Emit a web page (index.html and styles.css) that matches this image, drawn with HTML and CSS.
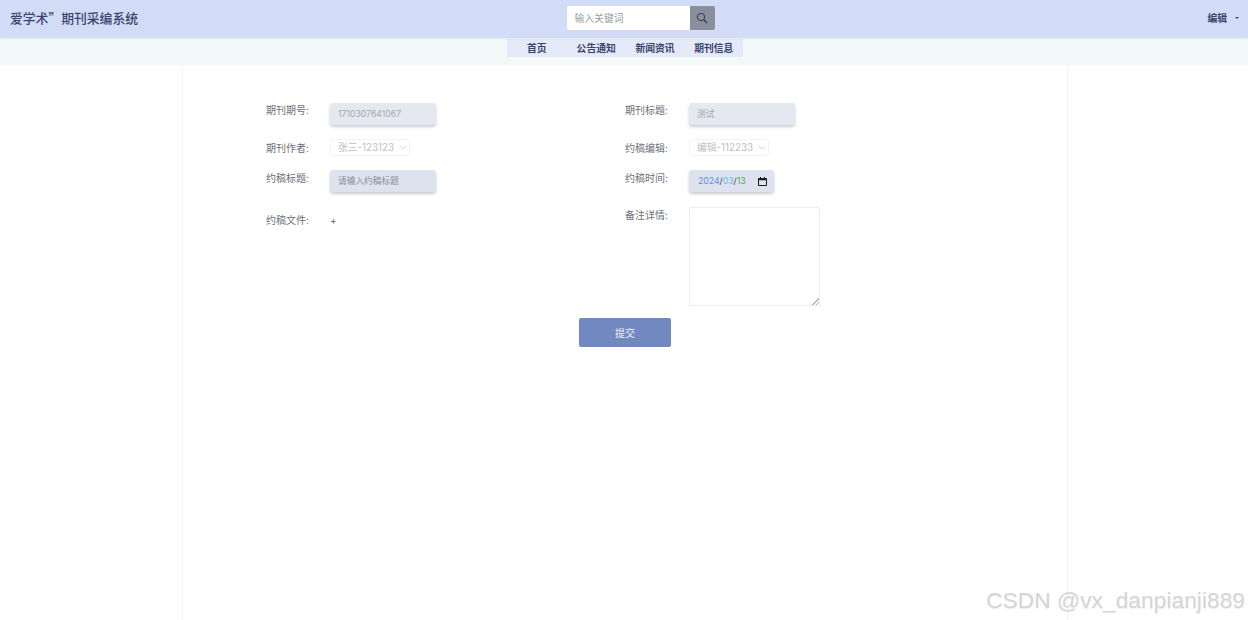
FILE: index.html
```html
<!DOCTYPE html>
<html lang="zh-CN">
<head>
  <meta charset="UTF-8" />
  <title>爱学术”期刊采编系统</title>
  <link rel="stylesheet" href="styles.css">
</head>
<body>
  <header class="topbar">
    <div class="brand">爱学术”期刊采编系统</div>
    <form class="search">
      <input class="search-input" type="text" placeholder="输入关键词" />
      <button class="search-btn" type="button" aria-label="搜索">
        <svg width="12" height="12" viewBox="0 0 12 12" fill="none" stroke="#2f3a55" stroke-width="1">
          <circle cx="5" cy="5" r="3.7" />
          <path d="M7.8 7.8 11 11" stroke-width="1.4" />
        </svg>
      </button>
    </form>
    <div class="user">编辑<span class="caret"></span></div>
  </header>

  <nav class="navbar">
    <div class="nav-inner">
      <a class="nav-home">首页</a>
      <a>公告通知</a>
      <a>新闻资讯</a>
      <a>期刊信息</a>
    </div>
  </nav>

  <main class="page">
    <form class="entry-form">
      <div class="form-grid">
        <div class="field">
          <label>期刊期号:</label>
          <input class="text-input" type="text" value="1710307641067" readonly />
        </div>
        <div class="field">
          <label>期刊标题:</label>
          <input class="text-input" type="text" value="测试" readonly />
        </div>

        <div class="field row-select">
          <label>期刊作者:</label>
          <div class="select-wrap">
            <select disabled><option>张三-123123</option></select>
            <svg class="chevron" width="8" height="5" viewBox="0 0 8 5" fill="none" stroke="#d0d3d8"><path d="M.5.7 4 4.200 7.500.7" /></svg>
          </div>
        </div>
        <div class="field row-select">
          <label>约稿编辑:</label>
          <div class="select-wrap">
            <select disabled><option>编辑-112233</option></select>
            <svg class="chevron" width="8" height="5" viewBox="0 0 8 5" fill="none" stroke="#d0d3d8"><path d="M.5.7 4 4.200 7.500.7" /></svg>
          </div>
        </div>

        <div class="field row-title">
          <label>约稿标题:</label>
          <input class="text-input strong" type="text" placeholder="请输入约稿标题" />
        </div>
        <div class="field row-title">
          <label>约稿时间:</label>
          <div class="date-field">
            <span class="date-y">2024</span>/<span class="date-m">03</span>/<span class="date-d">13</span>
            <svg class="date-icon" width="9" height="9" viewBox="0 0 9 9">
              <path fill="#1c1c1c" d="M1 .9h1V0h1v.9h3V0h1v.9h1c.5 0 1 .4 1 1V8c0 .6-.5 1-1 1H1c-.5 0-1-.4-1-1V1.900c0-.6.5-1 1-1zM1 3.200V8h7V3.200z" />
            </svg>
          </div>
        </div>

        <div class="field row-file">
          <label>约稿文件:</label>
          <span class="upload">+</span>
        </div>
        <div class="field row-notes">
          <label>备注详情:</label>
          <textarea></textarea>
        </div>
      </div>
      <button class="submit" type="button">提交</button>
    </form>
  </main>

  <div class="watermark">CSDN @vx_danpianji889</div>
</body>
</html>
```

FILE: styles.css
```css
:root {
  --ink: #39446e;
  --label: #6b6f78;
  --field: #e4e8f1;
  --field-strong: #dde2ee;
  --cjk: "Noto Sans CJK SC", "Noto Sans", sans-serif;
}
* { box-sizing: border-box; margin: 0; padding: 0; }
html, body { height: 100%; overflow: hidden; }
body {
  font-family: "Inter", var(--cjk);
  font-size: 10px;
  background: #fff;
  color: var(--label);
  display: flex;
  flex-direction: column;
  position: relative;
}

.topbar {
  flex: none;
  height: 38px;
  background: #d3dcf6;
  box-shadow: 0 1px 2px rgba(0, 0, 0, 0.08);
  display: grid;
  grid-template-columns: 1fr auto 1fr;
  align-items: center;
  padding: 0 9px 2px 10px;
  position: relative;
}
.brand {
  font-family: var(--cjk);
  font-size: 12.8px;
  font-weight: 500;
  color: var(--ink);
  margin-bottom: 2px;
}
.search { display: flex; height: 24px; margin-left: 32px; }
.search-input {
  width: 123px;
  border: none;
  border-radius: 2px 0 0 2px;
  background: #fff;
  padding: 0 8px;
  font: 9.8px var(--cjk);
  outline: none;
}
.search-input::placeholder { color: #9a9da3; }
.search-btn {
  width: 25px;
  border: none;
  border-radius: 0 2px 2px 0;
  background: #8b8f9c;
  display: flex;
  align-items: center;
  justify-content: center;
}
.user {
  justify-self: end;
  font-size: 9.8px;
  font-weight: 700;
  color: var(--ink);
  display: flex;
  align-items: center;
  gap: 8px;
}
.caret {
  width: 0;
  height: 0;
  border: 2.5px solid transparent;
  border-top-color: var(--ink);
  border-bottom: none;
}

.navbar {
  flex: none;
  height: 27px;
  background: #f3f8f8;
  display: flex;
  justify-content: center;
  align-items: flex-start;
  padding: 1px 0 0 2px;
}
.nav-inner {
  width: 236px;
  height: 18px;
  background: #e4eaf7;
  display: flex;
  align-items: center;
  padding-left: 20px;
  font-size: 9.8px;
  font-weight: 700;
  color: var(--ink);
}
.nav-inner a { margin-right: 19.6px; white-space: nowrap; }
.nav-inner .nav-home { margin-right: 30px; }

.page {
  flex: 1;
  width: 886px;
  margin-left: 182px;
  border-left: 1px solid #f4f4f4;
  border-right: 1px solid #f4f4f4;
  padding: 38px 0 0 83px;
}
.form-grid {
  display: grid;
  grid-template-columns: 359px 1fr;
  row-gap: 14px;
}
.field {
  display: flex;
  align-items: flex-start;
}
.field label {
  width: 64px;
  flex: none;
  line-height: 14px;
  color: var(--label);
}
.row-select label { margin-top: 2px; }
.row-title label { margin-top: 1px; }
.row-file { padding-top: 7px; }
.row-notes { padding-top: 1px; }
.row-notes label { margin-top: 1px; }

.text-input {
  width: 106px;
  height: 22px;
  border: none;
  border-radius: 3px;
  background: var(--field);
  box-shadow: 0 2px 3px rgba(0, 0, 0, 0.2);
  padding: 0 8px 1px;
  font: 8.7px "Inter", var(--cjk);
  color: #a4a7ae;
  outline: none;
}
.strong { background: var(--field-strong); padding-bottom: 0; }
.strong::placeholder { color: #8a8d96; }
.date-field {
  width: 85px;
  height: 22px;
  border-radius: 3px;
  background: var(--field-strong);
  box-shadow: 0 2px 3px rgba(0, 0, 0, 0.2);
  padding: 0 7px 0 9px;
  display: flex;
  align-items: center;
  font-size: 8.7px;
  color: #3a3f4a;
}
.date-y { color: #5b8fe0; }
.date-m { color: #6cbcf0; }
.date-d { color: #4fae62; }
.date-icon { margin-left: auto; }

.select-wrap { position: relative; width: 80px; height: 17px; }
.select-wrap select {
  width: 100%;
  height: 100%;
  appearance: none;
  border: 1px solid #f2f3f5;
  border-radius: 3px;
  background: #fff;
  padding-left: 7px;
  font: 9.8px "Inter", var(--cjk);
  color: #bcbfc5;
  opacity: 1;
}
.chevron { position: absolute; right: 3px; top: 6px; }

.upload { font-size: 10px; line-height: 14px; color: #666; }

textarea {
  width: 131px;
  height: 99px;
  border: 1px solid #eeeeef;
  border-radius: 2px;
  background: #fff;
  outline: none;
}
textarea::-webkit-resizer {
  background: linear-gradient(135deg, transparent 45%, #b5b5b5 45%, #b5b5b5 58%, transparent 58%, transparent 72%, #b5b5b5 72%, #b5b5b5 85%, transparent 85%) no-repeat right bottom / 7px 7px;
}

.submit {
  display: block;
  width: 92px;
  height: 29px;
  margin: 12px 0 0 313px;
  border: none;
  border-radius: 2px;
  background: #7288c0;
  color: #eef1f8;
  font: 10px var(--cjk);
}

.watermark {
  position: absolute;
  right: 3px;
  bottom: 6px;
  font: 22.8px "Liberation Sans", sans-serif;
  color: #d6d6d6;
  text-shadow: 0 1px 1px rgba(0, 0, 0, 0.08);
}
```
